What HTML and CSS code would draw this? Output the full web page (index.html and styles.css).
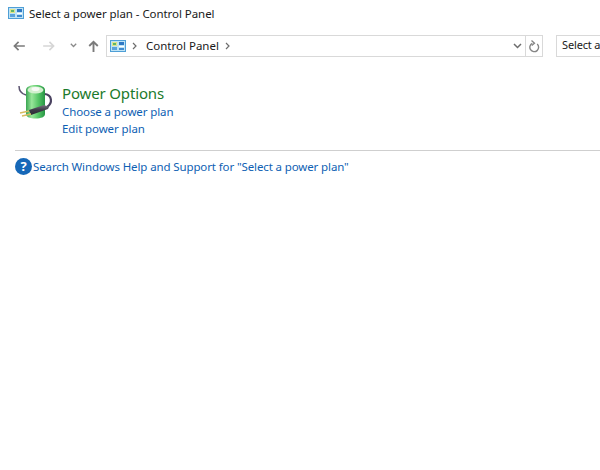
FILE: index.html
```html
<!DOCTYPE html>
<html lang="en">
<head>
    <meta charset="UTF-8">
    <title>Select a power plan - Control Panel</title>
    <link rel="stylesheet" href="styles.css">
</head>
<body>
    <div class="titlebar">
        <svg class="cp-icon" width="16" height="12" viewBox="0 0 16 12">
            <rect x="0.500" y="0.500" width="15" height="11" fill="#bfe3f5" stroke="#4f9fd6"/>
            <rect x="2" y="2" width="5" height="4" fill="#dfe58a"/>
            <rect x="3" y="3" width="3" height="2" fill="#5fb56a"/>
            <rect x="2" y="7" width="5" height="3" fill="#5aa2dc"/>
            <rect x="9" y="2" width="5" height="3" fill="#2f78c4"/>
            <rect x="9" y="6" width="5" height="1" fill="#ffffff"/>
            <rect x="9" y="8" width="5" height="2" fill="#3f8ad0"/>
        </svg>
        <span>Select a power plan - Control Panel</span>
    </div>

    <div class="navbar">
        <div class="nav-buttons">
            <svg class="nav-back" width="12" height="10" viewBox="0 0 14 12">
                <path d="M14 6H2M6.500 1L1.500 6l5 5" fill="none" stroke="#7b7b7b" stroke-width="2"/>
            </svg>
            <svg class="nav-forward" width="12" height="10" viewBox="0 0 14 12">
                <path d="M0 6h12M7.500 1L12.500 6l-5 5" fill="none" stroke="#d6d6d6" stroke-width="2"/>
            </svg>
            <svg class="nav-recent" width="7" height="5" viewBox="0 0 7 5">
                <path d="M0.800 0.800L3.500 3.500l2.700-2.700" fill="none" stroke="#8a8a8a" stroke-width="1.300"/>
            </svg>
            <svg class="nav-up" width="11" height="12" viewBox="0 0 12 14">
                <path d="M6 14V2M1 7L6 2l5 5" fill="none" stroke="#7b7b7b" stroke-width="2.200"/>
            </svg>
        </div>
        <div class="address">
            <svg class="cp-icon" width="16" height="12" viewBox="0 0 16 12">
                <rect x="0.500" y="0.500" width="15" height="11" fill="#bfe3f5" stroke="#4f9fd6"/>
                <rect x="2" y="2" width="5" height="4" fill="#dfe58a"/>
                <rect x="3" y="3" width="3" height="2" fill="#5fb56a"/>
                <rect x="2" y="7" width="5" height="3" fill="#5aa2dc"/>
                <rect x="9" y="2" width="5" height="3" fill="#2f78c4"/>
                <rect x="9" y="6" width="5" height="1" fill="#ffffff"/>
                <rect x="9" y="8" width="5" height="2" fill="#3f8ad0"/>
            </svg>
            <svg class="crumb-sep" width="5" height="8" viewBox="0 0 5 8">
                <path d="M1 1l3 3-3 3" fill="none" stroke="#6d6d6d" stroke-width="1.200"/>
            </svg>
            <span class="crumb">Control Panel</span>
            <svg class="crumb-sep" width="5" height="8" viewBox="0 0 5 8">
                <path d="M1 1l3 3-3 3" fill="none" stroke="#6d6d6d" stroke-width="1.200"/>
            </svg>
            <svg class="address-drop" width="9" height="6" viewBox="0 0 9 6">
                <path d="M1 1l3.500 3.500L8 1" fill="none" stroke="#6d6d6d" stroke-width="1.500"/>
            </svg>
            <div class="refresh">
                <svg width="11" height="13" viewBox="0 0 11 13">
                    <path d="M3.300 3.300A4.400 4.400 0 1 0 8.200 4" fill="none" stroke="#858585" stroke-width="1.400"/>
                    <path d="M2.500 0.500L5.500 3.200 2.700 5.500" fill="none" stroke="#858585" stroke-width="1.300"/>
                </svg>
            </div>
        </div>
        <div class="search">Select a</div>
    </div>

    <div class="content">
        <div class="result">
            <svg class="power-icon" width="38" height="38" viewBox="0 0 38 38">
                <defs>
                    <linearGradient id="battery" x1="0" x2="1" y1="0" y2="0">
                        <stop offset="0" stop-color="#3aa552"/>
                        <stop offset="0.3" stop-color="#98e69a"/>
                        <stop offset="0.65" stop-color="#55c566"/>
                        <stop offset="1" stop-color="#279544"/>
                    </linearGradient>
                    <linearGradient id="plug" x1="0" x2="0" y1="0" y2="1">
                        <stop offset="0" stop-color="#77747f"/>
                        <stop offset="0.5" stop-color="#3c3947"/>
                        <stop offset="1" stop-color="#2c2a34"/>
                    </linearGradient>
                </defs>
                <path d="M3 4C3 9 6 12 10 13" fill="none" stroke="#5c5470" stroke-width="1.500"/>
                <path d="M10 8c0-3 4-5 9.500-5S29 5 29 8v24c0 3-4 4.500-9.500 4.500S10 35 10 32z" fill="url(#battery)"/>
                <ellipse cx="19.500" cy="8" rx="8" ry="3.500" fill="#d3f0cf"/>
                <ellipse cx="19.500" cy="7" rx="4" ry="2" fill="#f7f9f5"/>
                <path d="M29 12C36 13 37 21 31 25" fill="none" stroke="#4a4260" stroke-width="2.200"/>
                <path d="M13 28L28 23 33 25 32 27 15 33z" fill="url(#plug)"/>
                <path d="M13 29L4 31M15 32L6 34" stroke="#d8bb60" stroke-width="1.400"/>
            </svg>
            <div class="result-text">
                <a class="result-title" href="#">Power Options</a>
                <a class="result-link" href="#">Choose a power plan</a>
                <a class="result-link" href="#">Edit power plan</a>
            </div>
        </div>
        <div class="help-row">
            <svg class="help-icon" width="17" height="17" viewBox="0 0 17 17">
                <circle cx="8.500" cy="8.500" r="8.500" fill="#1668b8"/>
                <text x="8.500" y="13" text-anchor="middle" class="help-mark">?</text>
            </svg>
            <a class="help-link" href="#">Search Windows Help and Support for "Select a power plan"</a>
        </div>
    </div>
</body>
</html>
```

FILE: styles.css
```css
html, body {
    margin: 0;
    padding: 0;
}
body {
    width: 600px;
    height: 470px;
    overflow: hidden;
    background: white;
    font-family: "Noto Sans", "Open Sans", sans-serif;
    font-size: 11.5px;
    color: #1a1a1a;
}
svg {
    display: block;
    flex: none;
}
a {
    text-decoration: none;
}
.titlebar {
    display: flex;
    align-items: center;
    height: 26px;
    padding-left: 8px;
}
.titlebar span {
    margin-left: 5px;
    letter-spacing: -0.06px;
}
.navbar {
    display: flex;
    align-items: center;
    height: 22px;
    margin-top: 9px;
}
.nav-buttons {
    display: flex;
    align-items: center;
    width: 106px;
    flex: none;
}
.nav-back {
    margin-left: 13px;
}
.nav-forward {
    margin-left: 18px;
}
.nav-recent {
    margin-left: 15px;
    margin-bottom: 1px;
}
.nav-up {
    margin-left: 11px;
}
.address {
    display: flex;
    align-items: center;
    width: 437px;
    height: 22px;
    box-sizing: border-box;
    border: 1px solid #d9d9d9;
    flex: none;
    padding-left: 3px;
}
.crumb-sep {
    margin-left: 6px;
}
.crumb {
    margin-left: 9px;
    padding-bottom: 2px;
}
.address-drop {
    margin-left: auto;
    margin-right: 3px;
}
.refresh {
    display: flex;
    align-items: center;
    justify-content: center;
    width: 16px;
    height: 20px;
    border-left: 1px solid #d9d9d9;
}
.search {
    width: 44px;
    height: 22px;
    box-sizing: border-box;
    margin-left: 13px;
    padding-left: 5px;
    border: 1px solid #d9d9d9;
    border-right: none;
    font-size: 11px;
    line-height: 18px;
    white-space: nowrap;
    letter-spacing: -0.15px;
}
.content {
    margin-left: 15px;
    margin-top: 25px;
}
.result {
    display: flex;
    height: 69px;
    box-sizing: border-box;
    border-bottom: 1px solid #cfcfcf;
}
.power-icon {
    margin-left: 1px;
}
.result-text {
    display: flex;
    flex-direction: column;
    margin-left: 8px;
    padding-top: 1px;
}
.result-title {
    color: #1b7a2c;
    font-size: 15px;
    line-height: 20px;
    letter-spacing: -0.15px;
}
.result-link {
    color: #0f5fb3;
    line-height: 17px;
    letter-spacing: -0.1px;
}
.help-row {
    display: flex;
    align-items: center;
    margin-top: 7px;
}
.help-link {
    margin-left: 1px;
    color: #0f5fb3;
    letter-spacing: -0.12px;
}
.help-mark {
    fill: white;
    font-family: "Noto Sans", sans-serif;
    font-size: 13px;
    font-weight: bold;
}
```
